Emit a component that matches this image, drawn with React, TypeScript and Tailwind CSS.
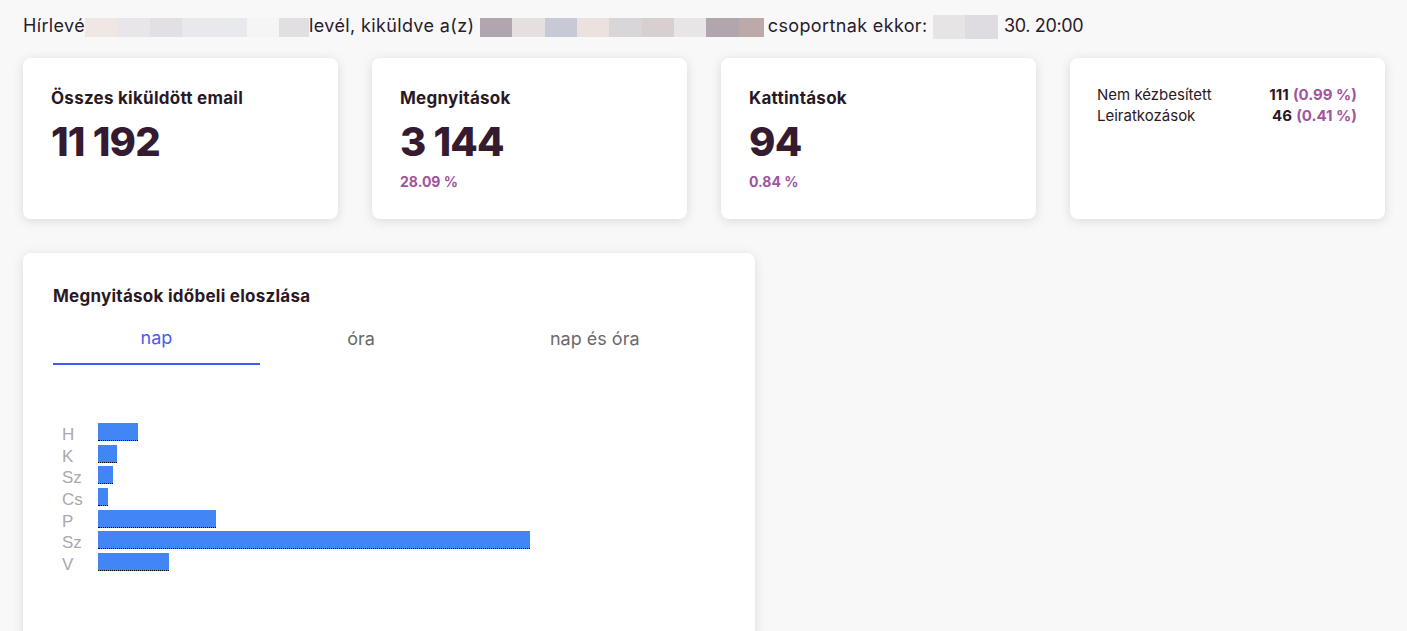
import React from "react";

const font = { fontFamily: "Inter, 'Noto Sans', sans-serif" };

function Block({ w, c, h = 19 }: { w: number; c: string; h?: number }) {
  return (
    <span
      className="inline-block align-middle"
      style={{ width: w, height: h, backgroundColor: c }}
    />
  );
}

function StatCard({ title, value, pct }: { title: string; value: string; pct?: string }) {
  return (
    <div className="bg-white rounded-lg shadow-[0_2px_12px_rgba(0,0,0,0.12)] h-[161px] pt-[28px] px-[28px]">
      <div className="text-[17px] leading-[24px] font-bold text-[#2a1826] tracking-[0.015em]">{title}</div>
      <div className="mt-[8px] text-[40px] leading-[48px] font-extrabold text-[#341b2f] tracking-[-0.02em]">{value}</div>
      {pct && <div className="mt-[6px] text-[14px] leading-[20px] font-bold text-[#a0559c]">{pct}</div>}
    </div>
  );
}

const bars = [
  { l: "H", w: 40 },
  { l: "K", w: 19 },
  { l: "Sz", w: 15 },
  { l: "Cs", w: 10 },
  { l: "P", w: 118 },
  { l: "Sz", w: 432 },
  { l: "V", w: 71 },
];

export default function App() {
  return (
    <div className="min-h-screen bg-[#f8f8f8] pl-[23px] pr-[22px] overflow-hidden" style={font}>
      <div className="pt-[14px] h-[58px] text-[18px] leading-[24px] text-[#2a1a2e] whitespace-nowrap tracking-[0.02em]">
        <span>Hírlevé</span>
        <Block w={32} c="#efe7e3" />
        <Block w={33} c="#e8e6e8" />
        <Block w={32} c="#e2e0e5" />
        <Block w={32} c="#e9e8ec" />
        <Block w={33} c="#e8e9ed" />
        <Block w={32} c="#f5f5f5" />
        <Block w={30} c="#e1dfe2" />
        <span>levél, kiküldve a(z) </span>
        <Block w={32} c="#b0a6b0" />
        <Block w={33} c="#e6dfdf" />
        <Block w={32} c="#c7cad6" />
        <Block w={32} c="#ebe2df" />
        <Block w={33} c="#d9d6d9" />
        <Block w={32} c="#d7cfd0" />
        <Block w={32} c="#e7e5e6" />
        <Block w={33} c="#b1a6ae" />
        <Block w={25} c="#bca9aa" />
        <span className="ml-[4px]">csoportnak ekkor: </span>
        <Block w={32} c="#e6e4e5" h={24} />
        <Block w={33} c="#dedbe1" h={24} />
        <span className="ml-[6px] tracking-[-0.02em]">30. 20:00</span>
      </div>

      <div className="grid grid-cols-4 gap-[34px]">
        <StatCard title="Összes kiküldött email" value="11 192" />
        <StatCard title="Megnyitások" value="3 144" pct="28.09 %" />
        <StatCard title="Kattintások" value="94" pct="0.84 %" />
        <div className="bg-white rounded-lg shadow-[0_2px_12px_rgba(0,0,0,0.12)] h-[161px] pt-[26px] pl-[27px] pr-[28px] text-[15px] leading-[21px] text-[#2a1826]">
          <div className="flex justify-between">
            <span>Nem kézbesített</span>
            <span>
              <span className="font-bold">111</span>{" "}
              <span className="font-bold text-[#a0559c]">(0.99 %)</span>
            </span>
          </div>
          <div className="flex justify-between">
            <span>Leiratkozások</span>
            <span>
              <span className="font-bold">46</span>{" "}
              <span className="font-bold text-[#a0559c]">(0.41 %)</span>
            </span>
          </div>
        </div>
      </div>

      <div className="mt-[34px] w-[732px] h-[400px] bg-white rounded-lg shadow-[0_2px_12px_rgba(0,0,0,0.12)] pt-[31px] pl-[30px] pr-[28px]">
        <div className="text-[17px] leading-[24px] font-bold text-[#2a1826] tracking-[0.015em]">
          Megnyitások időbeli eloszlása
        </div>
        <div className="mt-[8px] flex">
          <div className="flex-auto h-[49px] pb-[5px] flex items-center justify-center text-[18px] text-[#4a5cf0] border-b-2 border-[#3d5afe]">
            nap
          </div>
          <div className="flex-auto h-[49px] pb-[5px] flex items-center justify-center text-[18px] text-[#6a6a6a]">
            óra
          </div>
          <div className="flex-auto h-[49px] pb-[5px] flex items-center justify-center text-[18px] text-[#6a6a6a]">
            nap és óra
          </div>
        </div>
        <div className="mt-[58px] pl-[9px] flex flex-col">
          {bars.map((b, i) => (
            <div key={i} className="flex h-[21.67px]">
              <div
                className="w-[36px] text-[17px] leading-[18px] pt-[3px] text-[#a9a9a9]"
                style={{ fontFamily: "'Liberation Sans', Arial, sans-serif" }}
              >
                {b.l}
              </div>
              <div
                className="h-[18px] bg-[#4285f4] border-b border-dotted border-black"
                style={{ width: b.w }}
              />
            </div>
          ))}
        </div>
      </div>
    </div>
  );
}
